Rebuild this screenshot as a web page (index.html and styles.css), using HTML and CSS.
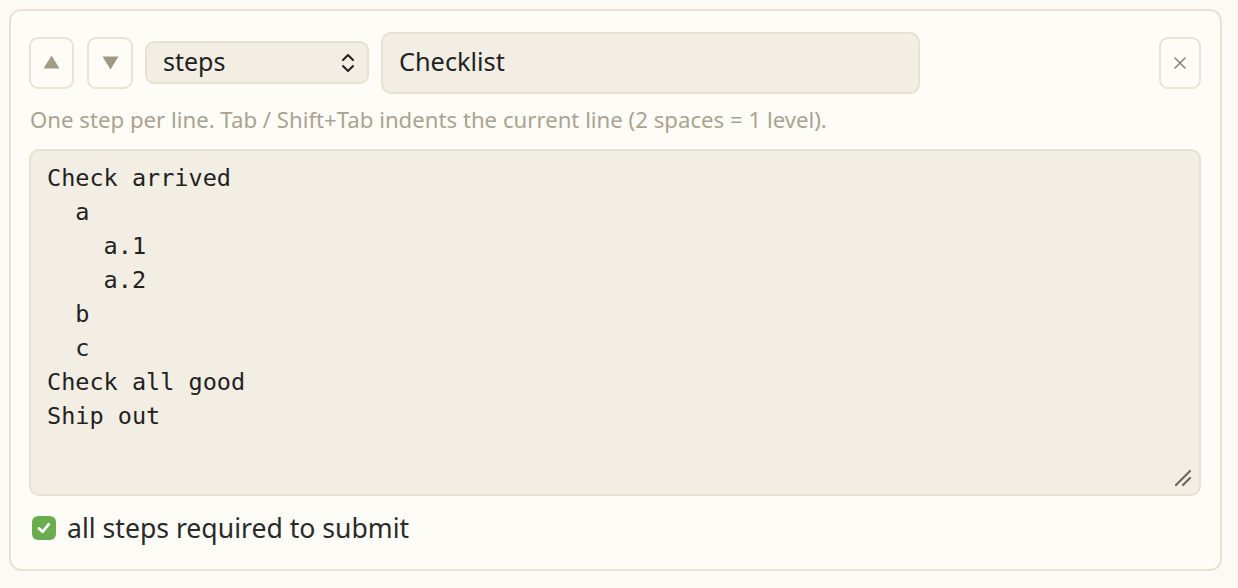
FILE: index.html
```html
<!DOCTYPE html>
<html>
<head>
<meta charset="utf-8">
<link rel="stylesheet" href="styles.css">
</head>
<body>
<div class="card">
  <div class="toolbar">
    <button class="icon-btn up" aria-label="Move up"><svg width="17" height="14" viewBox="0 0 17 14"><path d="M8.5 0.5 L16.5 13.5 L0.5 13.5 Z" fill="#a19b88"/></svg></button>
    <button class="icon-btn down" aria-label="Move down"><svg width="17" height="14" viewBox="0 0 17 14"><path d="M0.5 0.5 L16.5 0.5 L8.5 13.5 Z" fill="#9f9984"/></svg></button>
    <div class="select">
      <span>steps</span>
      <svg class="chev" width="14" height="22" viewBox="0 0 14 22"><path d="M2 8 L7 3 L12 8 M2 14 L7 19 L12 14" fill="none" stroke="#222" stroke-width="2" stroke-linecap="round" stroke-linejoin="round"/></svg>
    </div>
    <div class="title-input"><span>Checklist</span></div>
    <div class="spacer"></div>
    <button class="icon-btn close" aria-label="Remove"><svg width="12" height="12" viewBox="0 0 12 12"><path d="M1 1 L11 11 M11 1 L1 11" stroke="#8a8577" stroke-width="1.6" stroke-linecap="round"/></svg></button>
  </div>
  <p class="hint">One step per line. Tab / Shift+Tab indents the current line (2 spaces = 1 level).</p>
  <div class="textarea"><pre>Check arrived
  a
    a.1
    a.2
  b
  c
Check all good
Ship out</pre>
    <svg class="grip" width="20" height="20" viewBox="0 0 20 20"><path d="M3 17 L17 3 M10 17 L17 10" stroke="#6b6760" stroke-width="2.2" stroke-linecap="round"/></svg>
  </div>
  <label class="req">
    <span class="check"><svg width="18" height="18" viewBox="0 0 18 18"><path d="M4 9.5 L7.6 12.8 L13.8 5.2" fill="none" stroke="#fff" stroke-width="2.8" stroke-linecap="round" stroke-linejoin="round"/></svg></span>
    <span>all steps required to submit</span>
  </label>
</div>
</body>
</html>
```
FILE: styles.css
```css
html, body {
  margin: 0;
  background: #fcfaf4;
}
body {
  padding: 9px 16px 0 9px;
  font-family: "Noto Sans", "Open Sans", sans-serif;
  color: #222;
}
.card {
  background: #fdfcf7;
  border: 2px solid #e6e2d4;
  border-radius: 12px;
  padding: 21px 19px 20px 18px;
  height: 562px;
  box-sizing: border-box;
}
.toolbar {
  display: flex;
  align-items: center;
  height: 61px;
}
.icon-btn {
  width: 45px;
  height: 52px;
  border: 2px solid #e8e4d6;
  border-radius: 9px;
  background: #fdfcf7;
  padding: 0;
  margin-right: 13px;
  display: flex;
  align-items: center;
  justify-content: center;
}
.icon-btn.up svg { position: relative; top: -1px; }
.icon-btn.down { width: 46px; margin-right: 12px; }
.icon-btn.close {
  width: 42px;
  margin-right: 0;
}
.select {
  width: 224px;
  height: 43px;
  box-sizing: border-box;
  background: #f2eee4;
  border: 2px solid #e6e1d2;
  border-radius: 9px;
  display: flex;
  align-items: center;
  justify-content: space-between;
  padding: 0 12px 0 16px;
  font-size: 25px;
  margin-right: 12px;
}
.select span { position: relative; top: -2px; }
.title-input {
  width: 539px;
  height: 62px;
  box-sizing: border-box;
  background: #f2eee4;
  border: 2px solid #e6e1d2;
  border-radius: 10px;
  padding: 0 16px;
  display: flex;
  align-items: center;
  font-size: 25.3px;
}
.title-input span { position: relative; top: -2px; }
.spacer { flex: 1; }
.hint {
  margin: 14px 0 0 1px;
  font-size: 22.2px;
  line-height: 26px;
  color: #aaa390;
}
.textarea {
  position: relative;
  margin-top: 16px;
  height: 347px;
  box-sizing: border-box;
  background: #f2eee4;
  border: 2px solid #e6e1d2;
  border-radius: 10px;
  padding: 10px 16px;
}
.textarea pre {
  margin: 0;
  font-family: "DejaVu Sans Mono", "Liberation Mono", monospace;
  font-size: 23.5px;
  line-height: 34px;
  color: #222;
}
.grip {
  position: absolute;
  right: 6px;
  bottom: 6px;
}
.req {
  display: flex;
  align-items: center;
  margin-top: 17px;
  margin-left: 3px;
  font-size: 26.6px;
  line-height: 30px;
  color: #2a2a2a;
}
.check {
  width: 24px;
  height: 24px;
  border-radius: 6px;
  background: #6aad4f;
  display: flex;
  align-items: center;
  justify-content: center;
  margin-right: 11px;
}
```
